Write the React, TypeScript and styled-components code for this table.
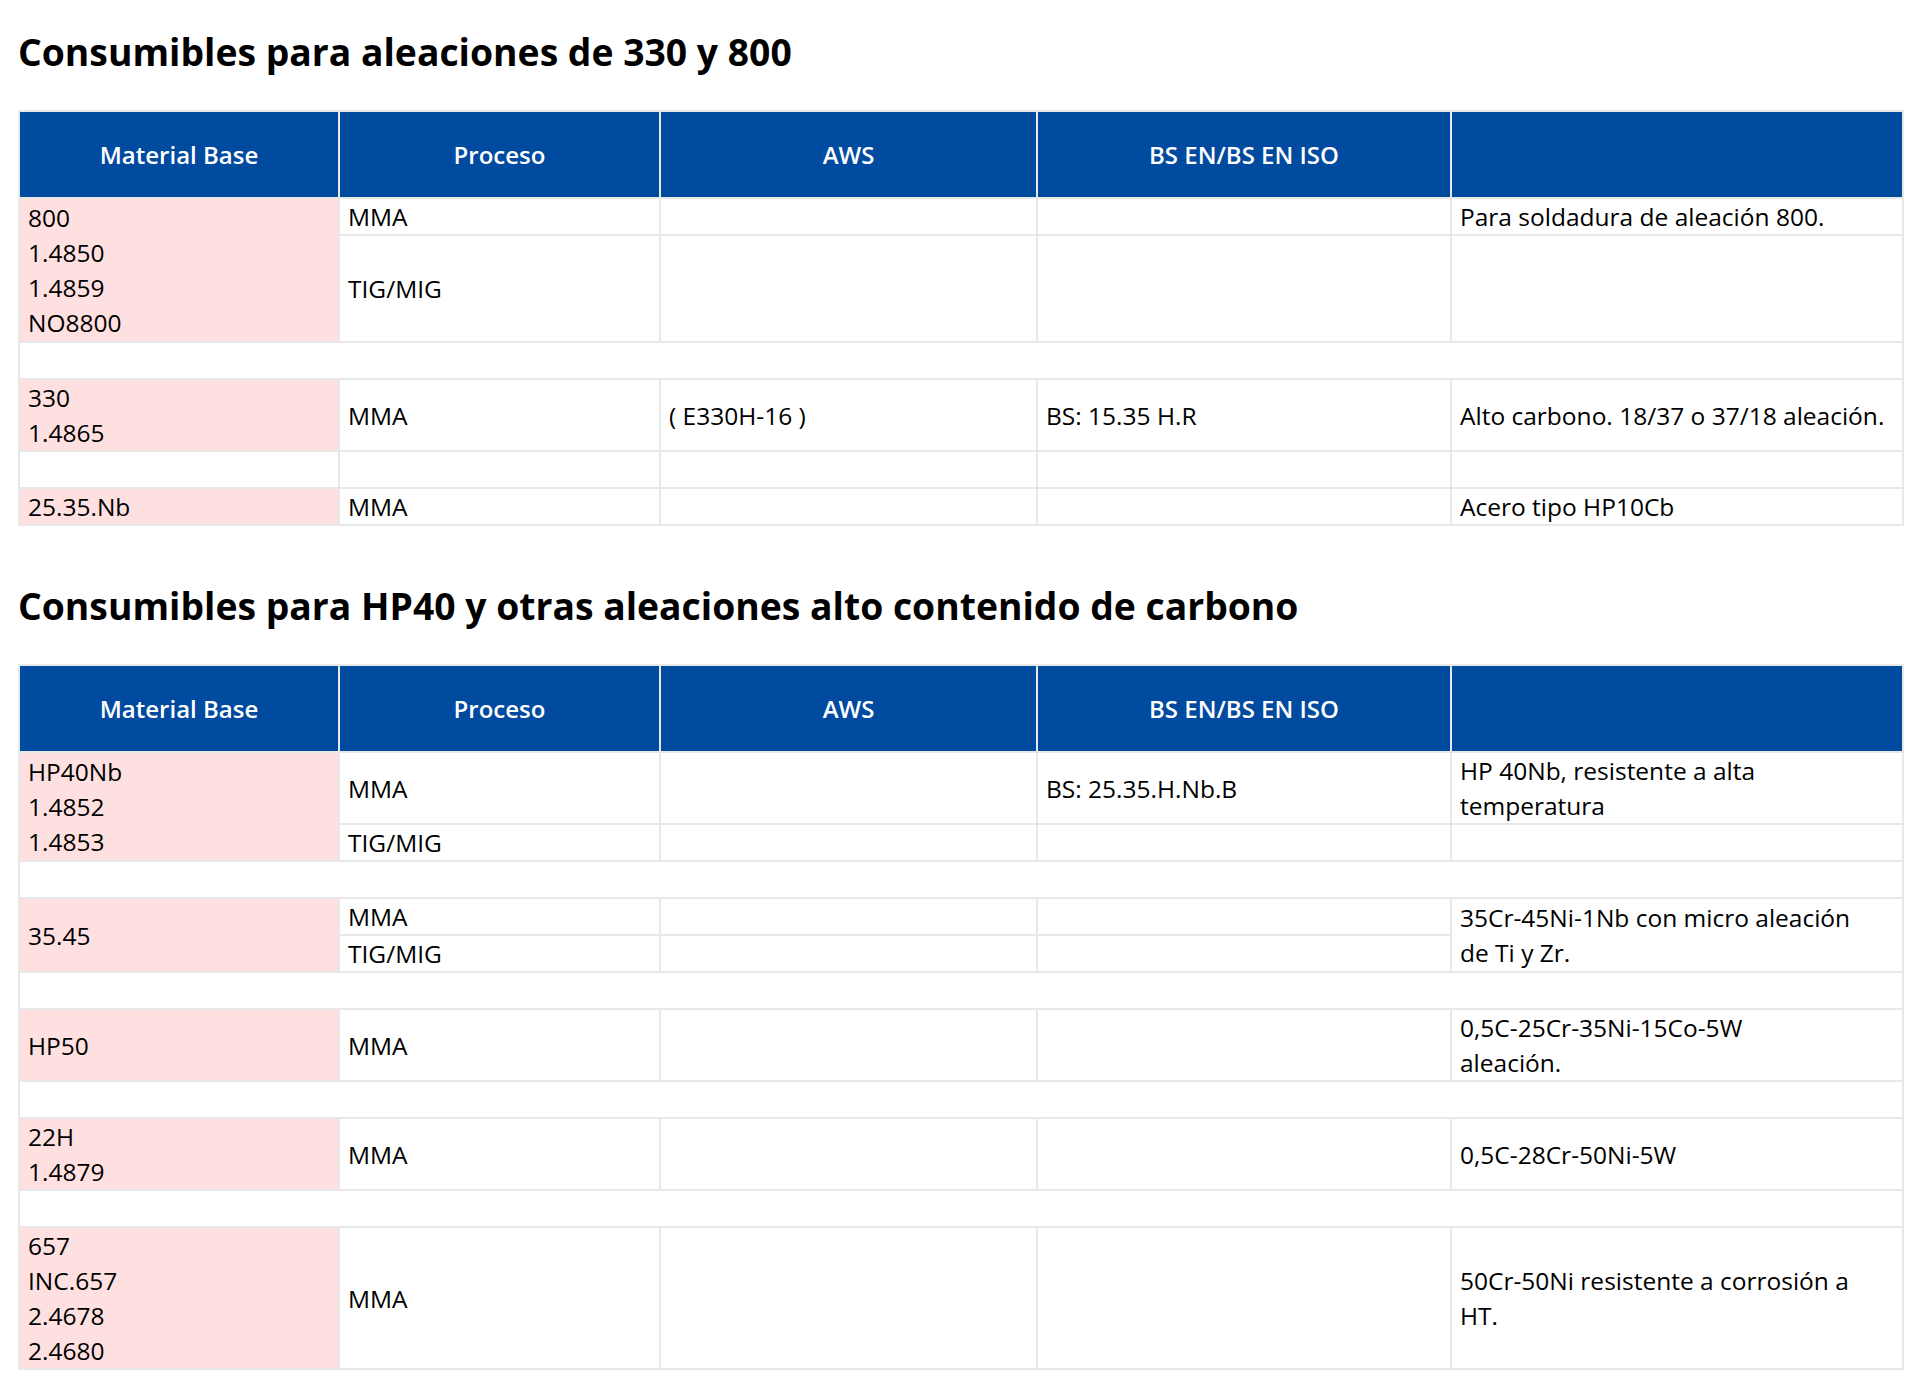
import styled, { createGlobalStyle } from 'styled-components';

const GlobalStyle = createGlobalStyle`
  body {
    margin: 0;
    background: #ffffff;
    font-family: 'Open Sans', 'Noto Sans', 'Liberation Sans', sans-serif;
    color: #000000;
  }
`;

const Page = styled.div`
  padding: 30px 18px 29px;
`;

const Section = styled.section`
  & + & {
    margin-top: 58px;
  }
`;

const Title = styled.h2`
  margin: 0 0 36px;
  font-size: 37.3px;
  line-height: 44px;
  font-weight: 700;
  color: #000000;
`;

const Table = styled.table`
  width: 100%;
  border-collapse: collapse;
  table-layout: fixed;
`;

const Row = styled.tr<{ $height?: number }>`
  height: ${(p) => (p.$height ? `${p.$height}px` : 'auto')};
`;

const HeadCell = styled.th`
  background: #004a9f;
  color: #ffffff;
  border: 2px solid #e8e8e8;
  padding: 25px 8px;
  font-size: 24px;
  line-height: 35px;
  font-weight: 600;
  text-align: center;
`;

const Cell = styled.td<{ $material?: boolean }>`
  background: ${(p) => (p.$material ? '#fee0e1' : '#ffffff')};
  border: 2px solid #e8e8e8;
  padding: 0 8px;
  font-size: 24.5px;
  line-height: 35px;
  vertical-align: middle;
  white-space: nowrap;
  color: #000000;
`;

const widths = [320, 321, 377, 414, 452];

function Head() {
  return (
    <>
      <colgroup>
        {widths.map((w, i) => (
          <col key={i} style={{ width: w }} />
        ))}
      </colgroup>
      <thead>
        <tr>
          <HeadCell>Material Base</HeadCell>
          <HeadCell>Proceso</HeadCell>
          <HeadCell>AWS</HeadCell>
          <HeadCell>BS EN/BS EN ISO</HeadCell>
          <HeadCell></HeadCell>
        </tr>
      </thead>
    </>
  );
}

function Spacer() {
  return (
    <tr>
      <Cell colSpan={5}>&nbsp;</Cell>
    </tr>
  );
}

function Lines({ items }: { items: string[] }) {
  return (
    <>
      {items.map((t, i) => (
        <span key={i}>
          {i > 0 && <br />}
          {t}
        </span>
      ))}
    </>
  );
}

export default function App() {
  return (
    <Page>
      <GlobalStyle />
      <Section>
        <Title>Consumibles para aleaciones de 330 y 800</Title>
        <Table>
          <Head />
          <tbody>
            <Row $height={37}>
              <Cell $material rowSpan={2}>
                <Lines items={['800', '1.4850', '1.4859', 'NO8800']} />
              </Cell>
              <Cell>MMA</Cell>
              <Cell></Cell>
              <Cell></Cell>
              <Cell>Para soldadura de aleación 800.</Cell>
            </Row>
            <Row $height={107}>
              <Cell>TIG/MIG</Cell>
              <Cell></Cell>
              <Cell></Cell>
              <Cell></Cell>
            </Row>
            <Spacer />
            <tr>
              <Cell $material>
                <Lines items={['330', '1.4865']} />
              </Cell>
              <Cell>MMA</Cell>
              <Cell>( E330H-16 )</Cell>
              <Cell>BS: 15.35 H.R</Cell>
              <Cell>Alto carbono. 18/37 o 37/18 aleación.</Cell>
            </tr>
            <tr>
              <Cell>&nbsp;</Cell>
              <Cell></Cell>
              <Cell></Cell>
              <Cell></Cell>
              <Cell></Cell>
            </tr>
            <tr>
              <Cell $material>25.35.Nb</Cell>
              <Cell>MMA</Cell>
              <Cell></Cell>
              <Cell></Cell>
              <Cell>Acero tipo HP10Cb</Cell>
            </tr>
          </tbody>
        </Table>
      </Section>

      <Section>
        <Title>Consumibles para HP40 y otras aleaciones alto contenido de carbono</Title>
        <Table>
          <Head />
          <tbody>
            <tr>
              <Cell $material rowSpan={2}>
                <Lines items={['HP40Nb', '1.4852', '1.4853']} />
              </Cell>
              <Cell>MMA</Cell>
              <Cell></Cell>
              <Cell>BS: 25.35.H.Nb.B</Cell>
              <Cell>
                <Lines items={['HP 40Nb, resistente a alta', 'temperatura']} />
              </Cell>
            </tr>
            <tr>
              <Cell>TIG/MIG</Cell>
              <Cell></Cell>
              <Cell></Cell>
              <Cell></Cell>
            </tr>
            <Spacer />
            <tr>
              <Cell $material rowSpan={2}>35.45</Cell>
              <Cell>MMA</Cell>
              <Cell></Cell>
              <Cell></Cell>
              <Cell rowSpan={2}>
                <Lines items={['35Cr-45Ni-1Nb con micro aleación', 'de Ti y Zr.']} />
              </Cell>
            </tr>
            <tr>
              <Cell>TIG/MIG</Cell>
              <Cell></Cell>
              <Cell></Cell>
            </tr>
            <Spacer />
            <tr>
              <Cell $material>HP50</Cell>
              <Cell>MMA</Cell>
              <Cell></Cell>
              <Cell></Cell>
              <Cell>
                <Lines items={['0,5C-25Cr-35Ni-15Co-5W', 'aleación.']} />
              </Cell>
            </tr>
            <Spacer />
            <tr>
              <Cell $material>
                <Lines items={['22H', '1.4879']} />
              </Cell>
              <Cell>MMA</Cell>
              <Cell></Cell>
              <Cell></Cell>
              <Cell>0,5C-28Cr-50Ni-5W</Cell>
            </tr>
            <Spacer />
            <tr>
              <Cell $material>
                <Lines items={['657', 'INC.657', '2.4678', '2.4680']} />
              </Cell>
              <Cell>MMA</Cell>
              <Cell></Cell>
              <Cell></Cell>
              <Cell>
                <Lines items={['50Cr-50Ni resistente a corrosión a', 'HT.']} />
              </Cell>
            </tr>
          </tbody>
        </Table>
      </Section>
    </Page>
  );
}
